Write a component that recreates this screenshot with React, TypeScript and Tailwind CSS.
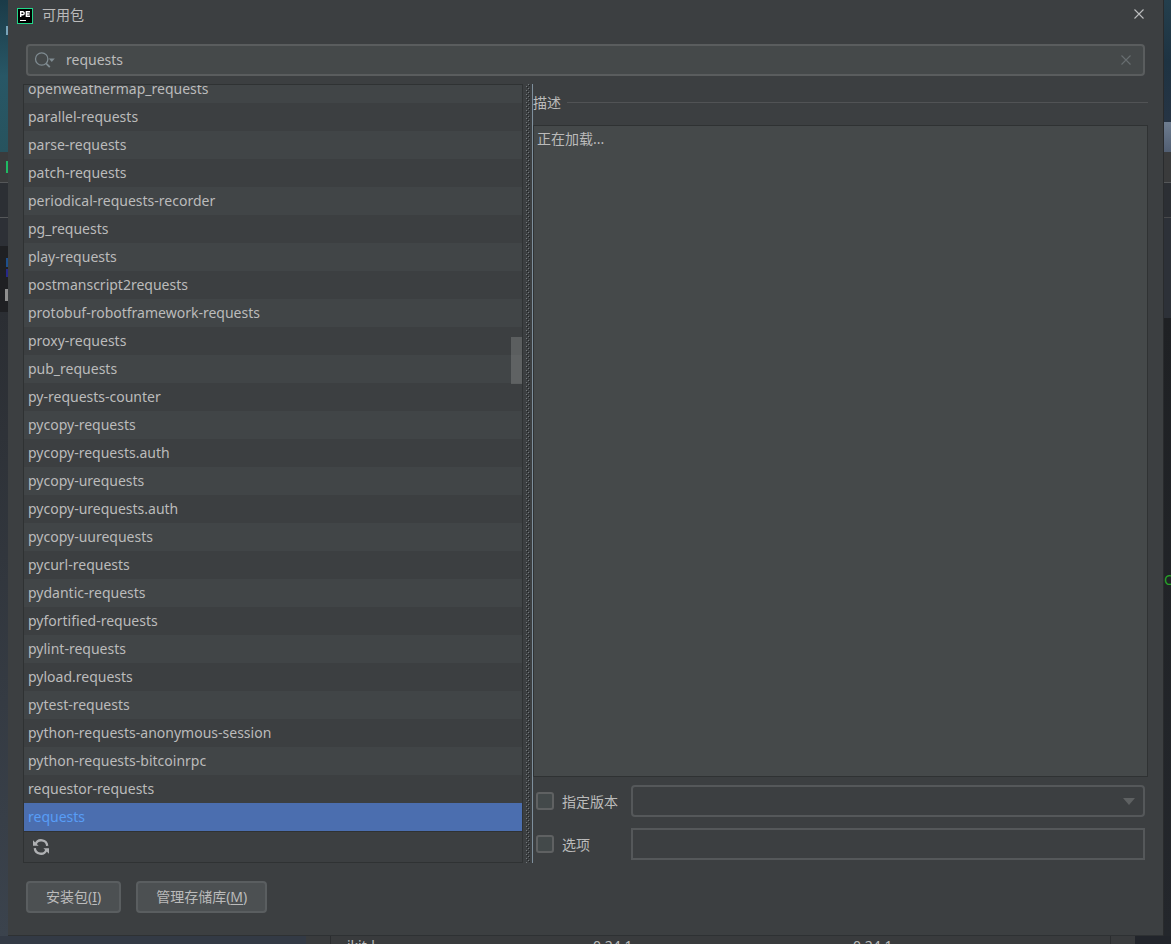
const packages = [
  'openweathermap_requests', 'parallel-requests', 'parse-requests', 'patch-requests',
  'periodical-requests-recorder', 'pg_requests', 'play-requests', 'postmanscript2requests',
  'protobuf-robotframework-requests', 'proxy-requests', 'pub_requests', 'py-requests-counter',
  'pycopy-requests', 'pycopy-requests.auth', 'pycopy-urequests', 'pycopy-urequests.auth',
  'pycopy-uurequests', 'pycurl-requests', 'pydantic-requests', 'pyfortified-requests',
  'pylint-requests', 'pyload.requests', 'pytest-requests', 'python-requests-anonymous-session',
  'python-requests-bitcoinrpc', 'requestor-requests', 'requests',
];

function AppLogo() {
  return (
    <svg viewBox="0 0 16 16" className="h-4 w-4" aria-hidden="true">
      <rect width="16" height="16" fill="#21d789" />
      <rect x="1" y="1" width="14" height="14" fill="#000" />
      <path d="M3.7 9V3.7h2a1.5 1.5 0 0 1 0 3H3.7M13 3.7H9.4v4.6H13M9.4 6h3.2" fill="none" stroke="#fff" strokeWidth="1.4" />
      <rect x="3" y="12" width="6" height="1" fill="#fff" />
    </svg>
  );
}

function CloseIcon({ className }: { className: string }) {
  return (
    <svg viewBox="0 0 12 12" className={className} aria-hidden="true">
      <path d="M1.5 1.5l9 9M10.5 1.5l-9 9" fill="none" stroke="currentColor" strokeWidth="1.1" />
    </svg>
  );
}

function SearchIcon() {
  return (
    <svg viewBox="0 0 22 18" className="h-[18px] w-[22px] shrink-0 text-[#7f8b91]" aria-hidden="true">
      <circle cx="7.7" cy="8" r="6.2" fill="none" stroke="currentColor" strokeWidth="1.3" />
      <path d="M12 12.3l3.8 3.8" fill="none" stroke="currentColor" strokeWidth="1.8" />
      <path d="M14.8 7.5h6l-3 3.5z" fill="currentColor" />
    </svg>
  );
}

function RefreshIcon() {
  return (
    <svg viewBox="0 0 16 16" className="h-4 w-4" aria-hidden="true">
      <path d="M2.6 5.2A6 6 0 0 1 14.2 6.8M13.4 10.8A6 6 0 0 1 1.8 9.2" fill="none" stroke="#afb1b3" strokeWidth="2.3" />
      <path d="M0 1.2v5.6h5.6zM16 14.8V9.2h-5.6z" fill="#afb1b3" />
    </svg>
  );
}

function Checkbox({ id }: { id: string }) {
  return (
    <input
      id={id}
      type="checkbox"
      className="h-[18px] w-[18px] shrink-0 appearance-none rounded-[3px] border-2 border-[#5f6162] bg-[#43494a] checked:bg-[#4b6eaf]"
    />
  );
}

export default function App() {
  return (
    <div className="flex h-screen flex-col overflow-hidden bg-[#2f3237] font-['Noto_Sans','Noto_Sans_CJK_SC',sans-serif] text-sm text-[#bbbbbb]">
      <div className="flex min-h-0 flex-1">
        <div className="flex w-2 shrink-0 flex-col" aria-hidden="true">
          <div className="flex h-[152px] items-start justify-end bg-linear-to-b from-[#1b3b48] via-[#285766] to-[#27535e] pt-[26px]">
            <span className="h-[9px] w-0.5 bg-[#79a5bb]" />
          </div>
          <div className="flex h-[31px] items-center justify-end border-b border-[#555759] bg-[#3a3b3c]">
            <span className="h-3 w-0.5 bg-[#1fba63]" />
          </div>
          <div className="h-[35px] border-b border-[#555759] bg-[#2c2f34]" />
          <div className="h-7 bg-[#2d3036]" />
          <div className="flex h-[66px] flex-col items-end bg-[#1f2023] pt-3">
            <span className="h-[9px] w-0.5 bg-[#1e4f8c]" />
            <span className="mt-0.5 h-2 w-0.5 bg-[#26298a]" />
            <span className="mt-3 h-3 w-[3px] bg-[#8f8f8f]" />
          </div>
          <div className="flex-1 bg-linear-to-b from-[#2b2e33] to-[#3b434d]" />
        </div>

        <main className="flex min-w-0 flex-1 flex-col border-b border-[#2e3133] bg-[#3c3f41]">
          <header className="flex h-8 shrink-0 items-center pr-[18px] pl-[9px]">
            <AppLogo />
            <h1 className="ml-[9px] flex-1 pb-0.5">可用包</h1>
            <button type="button" aria-label="关闭" className="mb-1 flex text-[#bcbdbe]">
              <CloseIcon className="h-3 w-3" />
            </button>
          </header>

          <div className="mx-[18px] mt-3 flex h-8 shrink-0 items-center rounded-[4px] border-2 border-[#5a5d5e] bg-[#45494a] pr-[11px] pl-1.5">
            <SearchIcon />
            <input
              type="text"
              aria-label="搜索"
              defaultValue="requests"
              className="ml-2.5 h-full min-w-0 flex-1 bg-transparent pb-0.5 outline-none"
            />
            <button type="button" aria-label="清除" className="flex text-[#686e71]">
              <CloseIcon className="h-3 w-3" />
            </button>
          </div>

          <div className="mx-[15px] mt-2 flex min-h-0 flex-1">
            <section className="flex w-4/9 shrink-0 flex-col border border-[#2f3233]">
              <div className="relative flex min-h-0 flex-1 flex-col justify-end overflow-hidden">
                <ul>
                  {packages.map((name) => (
                    <li
                      key={name}
                      className={
                        name === 'requests'
                          ? 'h-7 bg-[#4b6eaf] pl-1 leading-7 text-[#589df6]'
                          : 'h-7 pl-1 leading-7 odd:bg-[#414547]'
                      }
                    >
                      {name}
                    </li>
                  ))}
                </ul>
                <div className="absolute top-[252px] right-0 h-[47px] w-[11px] bg-[#a6a6a6]/30" />
              </div>
              <div className="flex h-[31px] shrink-0 items-center border-t border-[#2f3233] pl-[9px]">
                <button type="button" aria-label="重新加载" className="flex">
                  <RefreshIcon />
                </button>
              </div>
            </section>

            <div className="flex w-2.5 shrink-0 justify-end border-r border-[#7e8f9c] pr-px" aria-hidden="true">
              <svg className="h-full w-[5px]">
                <defs>
                  <pattern id="grip" width="5" height="4" patternUnits="userSpaceOnUse">
                    <rect x="0" y="2" width="1" height="1" fill="#73797c" />
                    <rect x="1" y="3" width="1" height="1" fill="#1f2224" />
                    <rect x="2" y="0" width="1" height="1" fill="#73797c" />
                    <rect x="3" y="1" width="1" height="1" fill="#1f2224" />
                  </pattern>
                </defs>
                <rect width="5" height="100%" fill="url(#grip)" />
              </svg>
            </div>

            <section className="flex min-w-0 flex-1 flex-col">
              <div className="flex h-[41px] shrink-0 items-center gap-1.5 pb-1">
                <h2>描述</h2>
                <div className="h-px flex-1 bg-[#515355]" />
              </div>
              <div className="min-h-0 flex-1 border border-[#2f3233] bg-[#45494a] px-[3px] py-[3px]">正在加载...</div>
              <div className="mt-2 mr-[3px] mb-[3px] grid grid-cols-[95px_1fr] items-center gap-x-[3px] gap-y-[11px]">
                <div className="flex items-center gap-2 pl-[3px]">
                  <Checkbox id="version-on" />
                  <label htmlFor="version-on" className="pt-0.5">指定版本</label>
                </div>
                <div className="relative">
                  <select
                    aria-label="指定版本"
                    className="block h-8 w-full appearance-none rounded-[4px] border-2 border-[#55585a] bg-transparent px-2 outline-none"
                  />
                  <svg viewBox="0 0 12 7" className="pointer-events-none absolute top-[13px] right-2.5 h-[7px] w-3" aria-hidden="true">
                    <path d="M0 0h12L6 7z" fill="#5e6162" />
                  </svg>
                </div>
                <div className="flex items-center gap-2 pl-[3px]">
                  <Checkbox id="options-on" />
                  <label htmlFor="options-on" className="pt-0.5">选项</label>
                </div>
                <input
                  type="text"
                  aria-label="选项"
                  className="block h-8 w-full border-2 border-[#55585a] bg-transparent px-2 outline-none"
                />
              </div>
            </section>
          </div>

          <footer className="mt-[18px] mb-[22px] flex shrink-0 gap-[15px] pl-[18px]">
            <button type="button" className="h-8 rounded-[4px] border-2 border-[#5a5e60] bg-[#4c5052] px-[18px]">
              安装包(<u className="underline-offset-2">I</u>)
            </button>
            <button type="button" className="h-8 rounded-[4px] border-2 border-[#5a5e60] bg-[#4c5052] px-[18px]">
              管理存储库(<u className="underline-offset-2">M</u>)
            </button>
          </footer>
        </main>

        <div className="flex w-2 shrink-0 flex-col border-l border-[#292b2d]" aria-hidden="true">
          <div className="h-[122px] bg-linear-to-b from-[#243f4d] via-[#1e3342] to-[#263444]" />
          <div className="h-[30px] bg-linear-to-b from-[#6e7d90] to-[#515e72]" />
          <div className="h-[31px] border-b border-[#555759] bg-[#3a3b3c]" />
          <div className="h-[35px] border-b border-[#48494b] bg-[#2c2f34]" />
          <div className="h-[100px] bg-[#2d3138]" />
          <div className="flex-1 overflow-hidden bg-linear-to-b from-[#1f2124] to-[#24272c] pt-[252px] leading-5 text-[#27a327]">O</div>
        </div>
      </div>

      <div className="flex h-2 shrink-0 overflow-hidden bg-[#393b3d] leading-5">
        <div className="w-[306px] shrink-0 bg-[#333a45]" />
        <div className="w-[25px] shrink-0 border-r border-[#2b2d2f]" />
        <div className="w-[262px] shrink-0 pl-4">ikit-l</div>
        <div className="w-[260px] shrink-0">0.24.1</div>
        <div className="flex-1">0.24.1</div>
        <div className="w-[25px] shrink-0 border-l border-[#2b2d2f]" />
        <div className="w-9 shrink-0 bg-[#22252b]" />
      </div>
    </div>
  );
}
